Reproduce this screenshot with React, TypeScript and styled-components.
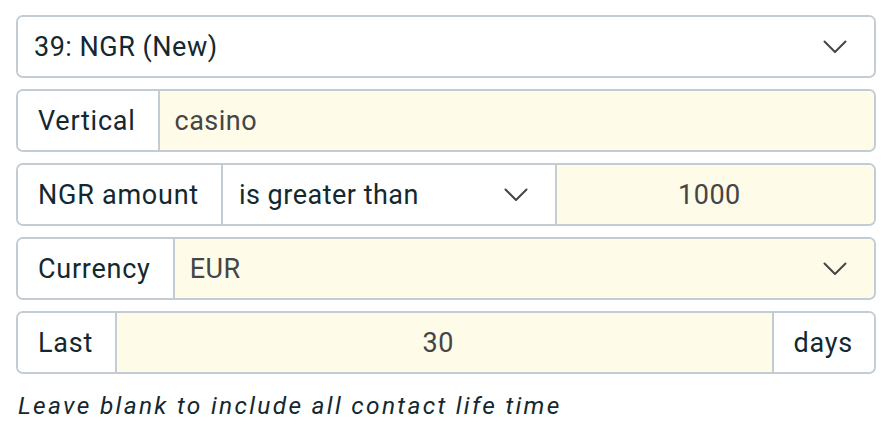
import React from 'react';
import styled, { createGlobalStyle } from 'styled-components';

const GlobalStyle = createGlobalStyle`
  body {
    margin: 0;
    background: #ffffff;
    font-family: Roboto, 'Liberation Sans', sans-serif;
  }
`;

const Form = styled.div`
  width: 860px;
  padding: 15px 0 0 16px;
  display: flex;
  flex-direction: column;
  gap: 11px;
`;

const Group = styled.div`
  display: flex;
  height: 63px;
  box-sizing: border-box;
  border: 2px solid #c3ccd3;
  border-radius: 7px;
  overflow: hidden;
`;

const Label = styled.div`
  display: flex;
  align-items: center;
  padding: 0 22px 0 20px;
  border-right: 2px solid #c3ccd3;
  background: #ffffff;
  color: #13282f;
  font-size: 27px;
  letter-spacing: 0.75px;
  white-space: nowrap;

  &:last-child {
    border-right: none;
    border-left: 2px solid #c3ccd3;
    padding: 0 21px 0 20px;
  }
`;

const Field = styled.div<{ $filled?: boolean; $center?: boolean; $width?: number }>`
  display: flex;
  align-items: center;
  justify-content: ${(p) => (p.$center ? 'center' : 'space-between')};
  flex: ${(p) => (p.$width ? `0 0 ${p.$width}px` : '1 1 auto')};
  box-sizing: border-box;
  padding: 0 27px 0 ${(p) => (p.$filled ? 15 : 16)}px;
  background: ${(p) => (p.$filled ? '#fefbe8' : '#ffffff')};
  color: ${(p) => (p.$filled ? '#454545' : '#13282f')};
  font-size: 27px;
  letter-spacing: 0.5px;
  white-space: nowrap;

  & + & {
    border-left: 2px solid #c3ccd3;
  }
`;

const Hint = styled.div`
  margin-top: 6px;
  padding-left: 2px;
  font-style: italic;
  font-size: 24.5px;
  letter-spacing: 2.3px;
  color: #13282f;
`;

const Chevron = () => (
  <svg width="24" height="14" viewBox="0 0 24 14" fill="none">
    <path d="M1.5 1.5 L12 12 L22.5 1.5" stroke="#454545" strokeWidth="2" strokeLinecap="round" strokeLinejoin="round" />
  </svg>
);

export default function App() {
  return (
    <>
      <GlobalStyle />
      <Form>
        <Group>
          <Field>
            <span>39: NGR (New)</span>
            <Chevron />
          </Field>
        </Group>
        <Group>
          <Label>Vertical</Label>
          <Field $filled>casino</Field>
        </Group>
        <Group>
          <Label>NGR amount</Label>
          <Field $width={332}>
            <span>is greater than</span>
            <Chevron />
          </Field>
          <Field $filled $center>1000</Field>
        </Group>
        <Group>
          <Label>Currency</Label>
          <Field $filled>
            <span>EUR</span>
            <Chevron />
          </Field>
        </Group>
        <Group>
          <Label>Last</Label>
          <Field $filled $center>30</Field>
          <Label>days</Label>
        </Group>
        <Hint>Leave blank to include all contact life time</Hint>
      </Form>
    </>
  );
}
